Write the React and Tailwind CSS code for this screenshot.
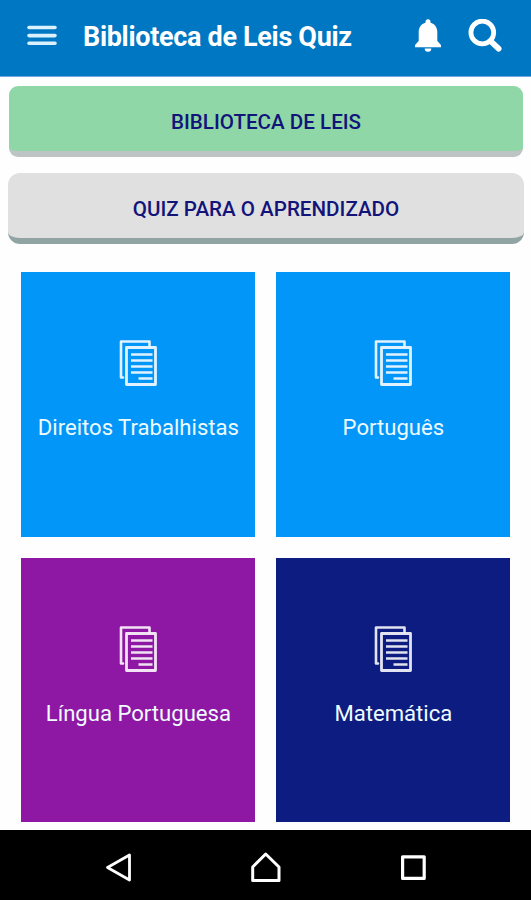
import React from "react";

function DocIcon() {
  return (
    <svg className="block h-12 w-10" viewBox="-0.500 0 40 48" fill="none" stroke="currentColor" strokeLinejoin="round">
      <path d="M31 6.500V2.500H2.500V38.500H4.500" strokeWidth="2.600" strokeLinecap="round" opacity=".88" />
      <rect x="8" y="8.500" width="29" height="37" strokeWidth="2.800" opacity=".88" />
      <path d="M12.500 15.500h21.500M12.500 21.500h21.500M12.500 27.500h21.500M12.500 33.500h21.500M20 39.500H34" strokeWidth="2.600" opacity=".88" />
    </svg>
  );
}

function Tile({ label, color }) {
  return (
    <button className={"flex flex-col items-center pt-[67px] text-white " + color}>
      <DocIcon />
      <span className="mt-6 text-[22.1px] leading-8 whitespace-nowrap text-[#eefbff]">{label}</span>
    </button>
  );
}

const tiles = [
  { label: "Direitos Trabalhistas", color: "bg-[#0296f9]" },
  { label: "Português", color: "bg-[#0296f9]" },
  { label: "Língua Portuguesa", color: "bg-[#8e18a4]" },
  { label: "Matemática", color: "bg-[#0c1c80]" },
];

export default function App() {
  return (
    <div className="flex h-[900px] w-[531px] flex-col overflow-hidden bg-[#fefefe] font-[Roboto,sans-serif]">
      <header className="flex h-[77px] shrink-0 items-center border-b border-[#6fa8de] bg-[#0077c2] pb-1 pl-[27px] text-white">
        <svg className="h-6 w-[30px]" viewBox="0 0 30 24" stroke="#dcf1ff" strokeWidth="3.600" strokeLinecap="round">
          <path d="M2 3.500H28M2 11.600H28M2 19.200H28" />
        </svg>
        <h1 className="ml-[26px] w-[331px] pt-0.5 text-[27px] leading-8 font-bold tracking-[-0.32px] whitespace-nowrap">Biblioteca de Leis Quiz</h1>
        <svg className="h-[34px] w-7" viewBox="0 0 28 34" fill="currentColor">
          <path d="M14 .3a2.500 2.500 0 0 0-2.500 2.500v.9C7.400 4.700 4.700 8.200 4.700 12.800V22L1 26V28.200H27V26L23.300 22V12.800C23.300 8.200 20.600 4.700 16.500 3.700V2.800A2.500 2.500 0 0 0 14 .3ZM10.700 29.400a3.300 3.300 0 0 0 6.600 0Z" />
        </svg>
        <svg className="ml-[26px] h-[34px] w-[34px]" viewBox="0 0 34 34" fill="none" stroke="currentColor">
          <circle cx="14.300" cy="13.500" r="11.400" strokeWidth="4.800" />
          <path d="M22.500 22L30.600 29.700" strokeWidth="5.800" strokeLinecap="round" />
        </svg>
      </header>

      <nav className="flex flex-col text-[20.6px] font-medium text-[#12147a]">
        <button className="mr-[8px] ml-[9px] mt-[9px] h-[71px] rounded-[9px] border-b-[6px] border-[#bec4c4] bg-[#8fd7a7] pt-2">
          BIBLIOTECA DE LEIS
        </button>
        <button className="mr-[7px] ml-[8px] mt-4 h-[71px] rounded-[12px] border-b-[6px] border-[#91a4a4] bg-[#e0e0e0] pt-2">
          QUIZ PARA O APRENDIZADO
        </button>
      </nav>

      <main className="mt-7 grid grid-cols-[234px_234px] grid-rows-[265px_264px] gap-[21px] pl-[21.4px]">
        {tiles.map((tile) => (
          <Tile key={tile.label} {...tile} />
        ))}
      </main>

      <footer className="mt-auto flex h-[70px] shrink-0 items-center bg-black pt-[5px] pl-[104px]">
        <svg className="h-8 w-8" viewBox="0 0 32 32" fill="none" stroke="white" strokeWidth="2.800" strokeLinejoin="round">
          <path d="M25.500 3V28L3.500 15.500Z" />
        </svg>
        <svg className="ml-[114px] h-8 w-8" viewBox="0 0 32 32" fill="none" stroke="white" strokeWidth="3" strokeLinejoin="round">
          <path d="M15.700 2L29 15V28.500H2.700V15Z" />
        </svg>
        <svg className="ml-[116px] h-8 w-8" viewBox="0 0 32 32" fill="none" stroke="white" strokeWidth="3.200" strokeLinejoin="round">
          <rect x="4.600" y="4.800" width="21.600" height="21.600" />
        </svg>
      </footer>
    </div>
  );
}
